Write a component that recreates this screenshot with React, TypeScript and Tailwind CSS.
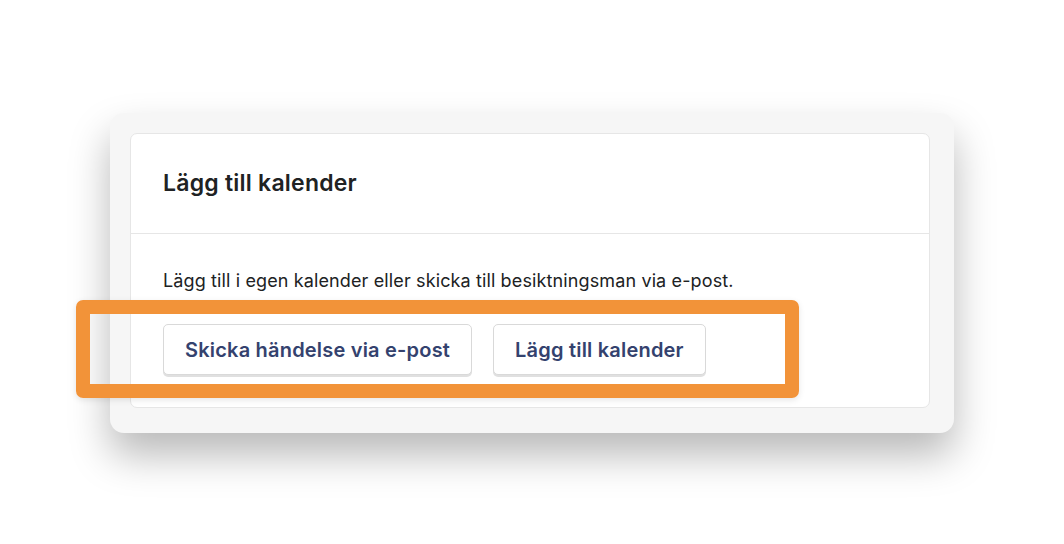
import React from "react";

const font = { fontFamily: "Inter, 'Noto Sans', sans-serif" };

function Button({ children }: { children: React.ReactNode }) {
  return (
    <button className="h-[51px] rounded-[5px] border border-[#d9d9d9] bg-white px-[21px] text-[20px] font-semibold tracking-[0.01em] text-[#34426e] shadow-[0_2px_0_rgba(0,0,0,0.12)]">
      {children}
    </button>
  );
}

export default function App() {
  return (
    <div className="min-h-[544px] bg-white pt-[113px]" style={font}>
      <div className="mx-auto w-[844px] rounded-[14px] bg-[#f6f6f6] pb-[25px] pl-[20px] pr-[24px] pt-[20px] shadow-[0_22px_40px_rgba(0,0,0,0.28)]">
        <div className="relative rounded-[7px] border border-[#e6e6e6] bg-white">
          <div className="flex h-[100px] items-center border-b border-[#e6e6e6] px-[32px]">
            <h2 className="text-[23px] font-semibold tracking-[0.01em] text-[#202223]">Lägg till kalender</h2>
          </div>
          <div className="px-[32px] pb-[32px] pt-[34px]">
            <p className="text-[18px] leading-[26px] tracking-[0.007em] text-[#202223]">
              Lägg till i egen kalender eller skicka till besiktningsman via e-post.
            </p>
            <div className="mt-[30px] flex gap-[21px]">
              <Button>Skicka händelse via e-post</Button>
              <Button>Lägg till kalender</Button>
            </div>
          </div>
          <div className="pointer-events-none absolute left-[-55px] top-[166px] h-[98px] w-[723px] rounded-[7px] border-[14px] border-[#f29339] shadow-[0_2px_6px_rgba(0,0,0,0.1)]" />
        </div>
      </div>
    </div>
  );
}
